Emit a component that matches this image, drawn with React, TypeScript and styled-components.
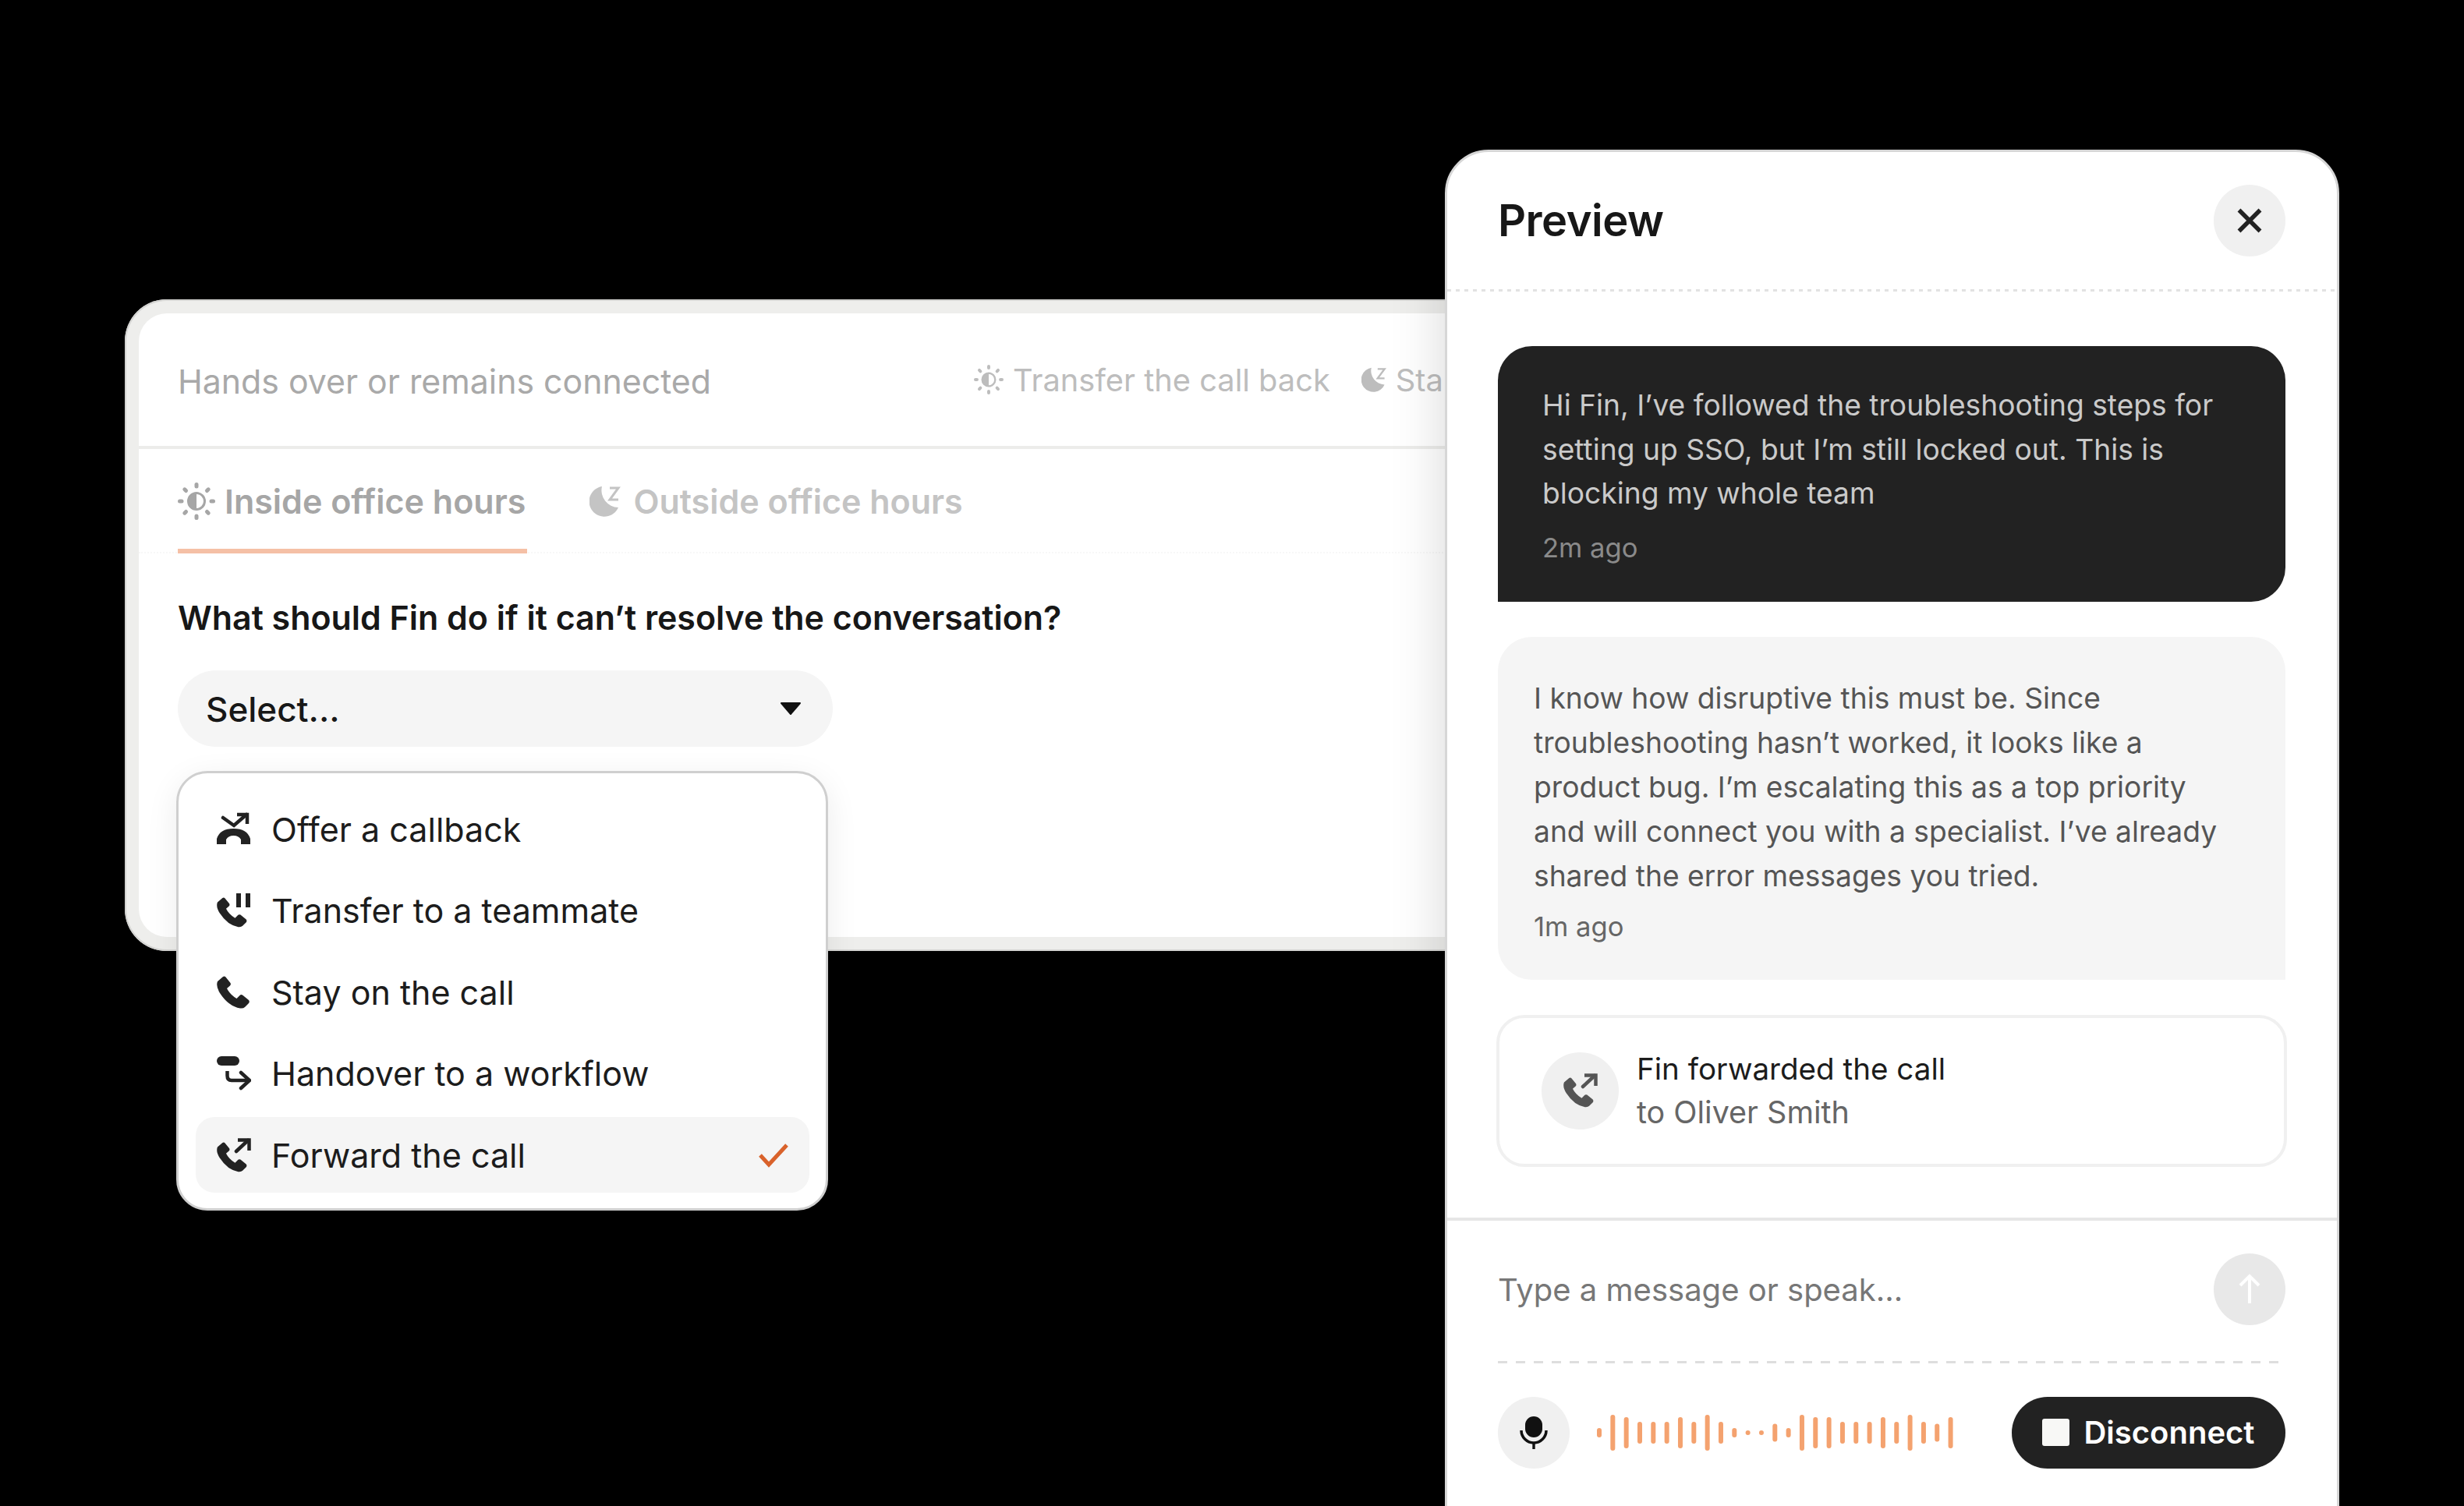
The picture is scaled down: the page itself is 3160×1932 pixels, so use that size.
import styled, { createGlobalStyle } from "styled-components";

const GlobalStyle = createGlobalStyle`
    html, body {
        margin: 0;
        padding: 0;
        background: #000;
    }
    * {
        box-sizing: border-box;
    }
`

const PHONE = "M1 7 L8 1 Q10 0 11.5 1.5 L17.5 9 Q18.5 11 17 12.5 L13 16 Q17 24 25.5 29 L29.5 25 Q31 23.5 33 24.5 L41 31 Q42.5 33 41 35 L36 40 Q34 42 30 41.5 Q15 39 4 22 Q-1.5 13 1 7 Z"

const menuItems = [
    { label: "Offer a callback", icon: "callback" },
    { label: "Transfer to a teammate", icon: "transfer" },
    { label: "Stay on the call", icon: "stay" },
    { label: "Handover to a workflow", icon: "handover" },
    { label: "Forward the call", icon: "forward", active: true },
]

// heights read off the reference, left to right
const waveBars = [12, 46, 40, 28, 28, 28, 40, 28, 46, 28, 12, 6, 6, 23, 12, 46, 40, 40, 28, 28, 28, 40, 28, 46, 28, 23, 40]

const SunIcon = ({ size, color }: { size: number; color: string }) => {
    const rays = [0, 45, 90, 135, 180, 225, 270, 315]
    return (
        <svg width={size} height={size} viewBox="0 0 48 48">
            {rays.map((r) => (
                <line key={r} x1="24" y1="2.5" x2="24" y2="5" stroke={color} strokeWidth="5" strokeLinecap="round" transform={`rotate(${r} 24 24)`} />
            ))}
            <circle cx="24" cy="24" r="10.5" fill="none" stroke={color} strokeWidth="3" />
            <path d="M24 13.5 A10.5 10.5 0 0 0 24 34.5 Z" fill={color} />
        </svg>
    )
}

const MoonIcon = ({ size, color }: { size: number; color: string }) => (
    <svg width={size} height={size} viewBox="0 0 40 40">
        <path d="M16 1 A19.5 19.5 0 1 0 37 28 A22 22 0 0 1 16 1 Z" fill={color} />
        <path d="M26 3 H37 L26 18 H37" fill="none" stroke={color} strokeWidth="3" />
    </svg>
)

const MenuIcon = ({ name, color = "#222" }: { name: string; color?: string }) => {
    const line = { fill: "none", stroke: color, strokeWidth: 4.5, strokeLinecap: "round" as const, strokeLinejoin: "miter" as const }
    return (
        <svg width="44" height="44" viewBox="0 0 44 44">
            {name === "callback" && (
                <>
                    <path d="M8 7 L22 17 L38 3" {...line} />
                    <path d="M26 3 H39 V15" {...line} strokeLinecap="butt" />
                    <path d="M0 41 V34 Q4 21 21.5 21 Q39 21 43 34 V41 H31 V35 Q28 30 21.5 30 Q15 30 12 35 V41 Z" fill={color} />
                </>
            )}
            {name === "transfer" && (
                <>
                    <path d={PHONE} fill={color} transform="translate(0 5) scale(0.92)" />
                    <rect x="25" y="0" width="6" height="18" fill={color} />
                    <rect x="37" y="0" width="6" height="18" fill={color} />
                </>
            )}
            {name === "stay" && <path d={PHONE} fill={color} transform="translate(0 1)" />}
            {name === "handover" && (
                <>
                    <rect x="0" y="0" width="29" height="12" rx="6" fill={color} />
                    <path d="M13.5 19 V25 Q13.5 31 19 31 H41" {...line} strokeLinecap="butt" />
                    <path d="M31 21 L42 31 L31 41" {...line} />
                </>
            )}
            {name === "forward" && (
                <>
                    <path d={PHONE} fill={color} transform="translate(0 5) scale(0.92)" />
                    <path d="M25 17 L40 3" {...line} />
                    <path d="M27 2.5 H41.5 V16" {...line} strokeLinecap="butt" />
                </>
            )}
        </svg>
    )
}

const App = () => {
    return (
        <Stage>
            <GlobalStyle />

            <SettingsCard>
                <SettingsInner>
                    <CardHeader>
                        <HeaderTitle>Hands over or remains connected</HeaderTitle>
                        <HeaderMeta>
                            <SunIcon size={38} color="#bdbdbd" />
                            <MetaText>Transfer the call back</MetaText>
                            <MoonSlot><MoonIcon size={32} color="#bdbdbd" /></MoonSlot>
                            <MetaText>Sta</MetaText>
                        </HeaderMeta>
                    </CardHeader>

                    <Tabs>
                        <Tab $active>
                            <SunIcon size={48} color="#a6a6a6" />
                            Inside office hours
                        </Tab>
                        <Tab>
                            <MoonIcon size={40} color="#c4c4c4" />
                            Outside office hours
                        </Tab>
                    </Tabs>

                    <CardBody>
                        <Question>What should Fin do if it can’t resolve the conversation?</Question>
                        <SelectBox>
                            <SelectValue>Select...</SelectValue>
                            <svg width="28" height="16" viewBox="0 0 28 16">
                                <path d="M2 1 H26 L14 15 Z" fill="#111" stroke="#111" strokeWidth="2" strokeLinejoin="round" />
                            </svg>
                        </SelectBox>
                    </CardBody>
                </SettingsInner>
            </SettingsCard>

            <Menu>
                {menuItems.map((item) => (
                    <MenuRow key={item.label} $active={item.active}>
                        <MenuIcon name={item.icon} />
                        <MenuLabel>{item.label}</MenuLabel>
                        {item.active && (
                            <CheckMark width="40" height="32" viewBox="0 0 40 32">
                                <path d="M3 16 L14 28 L37 3" fill="none" stroke="#d9622b" strokeWidth="5" />
                            </CheckMark>
                        )}
                    </MenuRow>
                ))}
            </Menu>

            <Preview>
                <PreviewHeader>
                    <PreviewTitle>Preview</PreviewTitle>
                    <RoundButton>
                        <svg width="32" height="32" viewBox="0 0 32 32">
                            <path d="M2.5 2.5 L29.5 29.5 M29.5 2.5 L2.5 29.5" stroke="#222" strokeWidth="5.5" />
                        </svg>
                    </RoundButton>
                </PreviewHeader>

                <Conversation>
                    <UserBubble>
                        <BubbleText>Hi Fin, I’ve followed the troubleshooting steps for setting up SSO, but I’m still locked out. This is blocking my whole team</BubbleText>
                        <BubbleTime $dark>2m ago</BubbleTime>
                    </UserBubble>
                    <FinBubble>
                        <BubbleText $tall>I know how disruptive this must be. Since troubleshooting hasn’t worked, it looks like a product bug. I’m escalating this as a top priority and will connect you with a specialist. I’ve already shared the error messages you tried.</BubbleText>
                        <BubbleTime>1m ago</BubbleTime>
                    </FinBubble>
                    <EventCard>
                        <EventIcon>
                            <MenuIcon name="forward" color="#555" />
                        </EventIcon>
                        <div>
                            <EventTitle>Fin forwarded the call</EventTitle>
                            <EventSub>to Oliver Smith</EventSub>
                        </div>
                    </EventCard>
                </Conversation>

                <Composer>
                    <InputRow>
                        <Placeholder>Type a message or speak...</Placeholder>
                        <RoundButton $muted>
                            <svg width="30" height="40" viewBox="0 0 30 40">
                                <path d="M15 38 V3 M3 15 L15 3 L27 15" fill="none" stroke="#fff" strokeWidth="4" />
                            </svg>
                        </RoundButton>
                    </InputRow>
                    <VoiceRow>
                        <RoundButton>
                            <svg width="36" height="42" viewBox="0 0 36 42">
                                <rect x="7" y="0" width="22" height="27" rx="11" fill="#111" />
                                <path d="M2 18 A16 16 0 0 0 34 18" fill="none" stroke="#111" strokeWidth="3.5" />
                                <rect x="16.3" y="33" width="3.4" height="9" fill="#111" />
                            </svg>
                        </RoundButton>
                        <Wave width="462" height="50" viewBox="0 0 462 50">
                            {waveBars.map((h, i) => (
                                <rect key={i} x={i * 17.33} y={25 - h / 2} width="6" height={h} rx="3" fill="#f4a26f" />
                            ))}
                        </Wave>
                        <DisconnectButton>
                            <StopSquare />
                            Disconnect
                        </DisconnectButton>
                    </VoiceRow>
                </Composer>
            </Preview>
        </Stage>
    )
}

export default App

const Stage = styled.div`
    position: relative;
    width: 3160px;
    height: 1932px;
    overflow: hidden;
    background: #000;
    font-family: "Inter", "Liberation Sans", sans-serif;
    color: #1a1a1a;
`

const SettingsCard = styled.section`
    position: absolute;
    left: 160px;
    top: 384px;
    width: 1760px;
    height: 836px;
    padding: 18px;
    border-radius: 54px;
    background: #eeeeec;
    box-shadow: inset 0 0 0 2px #d4d4d2;
`

const SettingsInner = styled.div`
    height: 100%;
    border-radius: 36px;
    background: #fff;
    overflow: hidden;
`

const CardHeader = styled.header`
    height: 174px;
    padding: 0 50px;
    display: flex;
    align-items: center;
    border-bottom: 4px solid #ececea;
`

const HeaderTitle = styled.h2`
    margin: 0;
    flex: none;
    width: 1021px;
    padding-top: 4px;
    font-size: 42.8px;
    font-weight: 400;
    color: #a9a9a9;
    white-space: nowrap;
`

const HeaderMeta = styled.div`
    flex: none;
    display: flex;
    align-items: center;
    gap: 12px;
    white-space: nowrap;
`

const MetaText = styled.span`
    font-size: 39.8px;
    color: #bdbdbd;
`

const MoonSlot = styled.span`
    display: flex;
    margin-left: 28px;
`

const Tabs = styled.nav`
    height: 134px;
    padding: 0 50px;
    display: flex;
    gap: 80px;
    border-bottom: 2px dotted #f8f8f8;
`

const Tab = styled.div<{ $active?: boolean }>`
    height: 134px;
    margin-bottom: -2px;
    padding: 6px ${({ $active }) => ($active ? "2px" : "0")} 0 0;
    display: flex;
    align-items: center;
    gap: ${({ $active }) => ($active ? "12px" : "16px")};
    font-size: 43px;
    font-weight: 600;
    color: ${({ $active }) => ($active ? "#a6a6a6" : "#c4c4c4")};
    border-bottom: 6px solid ${({ $active }) => ($active ? "#f5c0a6" : "transparent")};
`

const CardBody = styled.div`
    padding: 55px 50px 0;
`

const Question = styled.h3`
    margin: 0 0 41px;
    font-size: 42.9px;
    line-height: 54px;
    font-weight: 600;
    color: #171717;
`

const SelectBox = styled.div`
    width: 840px;
    height: 98px;
    padding: 0 40px 0 36px;
    display: flex;
    align-items: center;
    justify-content: space-between;
    border-radius: 49px;
    background: #f5f5f5;
`

const SelectValue = styled.span`
    padding-top: 2px;
    font-size: 44px;
    font-weight: 500;
    color: #171717;
`

const Menu = styled.div`
    position: absolute;
    left: 226px;
    top: 989px;
    width: 836px;
    height: 564px;
    padding: 23px 21px 20px 22px;
    display: flex;
    flex-direction: column;
    justify-content: space-between;
    border: 3px solid #cfcfcf;
    border-radius: 40px;
    background: #fff;
    box-shadow: 0 10px 40px rgba(0, 0, 0, 0.08);
`

const MenuRow = styled.div<{ $active?: boolean }>`
    height: 97px;
    padding: 0 26px 0 27px;
    display: flex;
    align-items: center;
    gap: 26px;
    border-radius: 24px;
    background: ${({ $active }) => ($active ? "#f5f5f5" : "transparent")};
`

const MenuLabel = styled.span`
    flex: 1;
    font-size: 43px;
    color: #1c1c1c;
`

const CheckMark = styled.svg`
    display: block;
`

const Preview = styled.aside`
    position: absolute;
    left: 1853px;
    top: 192px;
    width: 1147px;
    height: 1800px;
    border: 3px solid #d6d6d6;
    border-radius: 56px;
    background: #fff;
    box-shadow: 0 0 70px rgba(0, 0, 0, 0.16);
`

const PreviewHeader = styled.header`
    height: 179px;
    padding: 0 66px 3px 65px;
    display: flex;
    align-items: center;
    justify-content: space-between;
    background: repeating-linear-gradient(90deg, #e2e2e2 0 5px, transparent 5px 11px) bottom / 100% 3px no-repeat;
`

const PreviewTitle = styled.h1`
    margin: 0;
    font-size: 56px;
    letter-spacing: -0.5px;
    font-weight: 600;
    color: #171717;
`

const RoundButton = styled.div<{ $muted?: boolean }>`
    width: 92px;
    height: 92px;
    flex: none;
    display: flex;
    align-items: center;
    justify-content: center;
    border-radius: 50%;
    background: ${({ $muted }) => ($muted ? "#e8e8e8" : "#f0f0f0")};
`

const Conversation = styled.div`
    padding: 70px 66px 65px 65px;
    display: flex;
    flex-direction: column;
    gap: 45px;
    border-bottom: 4px solid #e6e6e6;
`

const UserBubble = styled.div`
    padding: 48px 57px;
    border-radius: 44px 44px 44px 0;
    background: #222;
    color: #cacaca;
`

const FinBubble = styled.div`
    padding: 50px 62px 47px 46px;
    border-radius: 44px 44px 0 44px;
    background: #f5f5f5;
    color: #555;
`

const BubbleText = styled.p<{ $tall?: boolean }>`
    margin: 0;
    font-size: 37.2px;
    line-height: ${({ $tall }) => ($tall ? "57px" : "56.5px")};
`

const BubbleTime = styled.div<{ $dark?: boolean }>`
    margin-top: ${({ $dark }) => ($dark ? "18px" : "14px")};
    font-size: 34.6px;
    line-height: 44px;
    color: ${({ $dark }) => ($dark ? "#8a8a8a" : "#666")};
`

const EventCard = styled.div`
    height: 195px;
    margin: 0 -2px;
    padding: 0 54px;
    display: flex;
    align-items: center;
    gap: 23px;
    border: 4px solid #f0f0f0;
    border-radius: 36px;
`

const EventIcon = styled.div`
    width: 99px;
    height: 99px;
    display: flex;
    align-items: center;
    justify-content: center;
    border-radius: 50%;
    background: #f0f0f0;
`

const EventTitle = styled.div`
    font-size: 38.6px;
    line-height: 56px;
    color: #1c1c1c;
`

const EventSub = styled.div`
    font-size: 39.5px;
    line-height: 56px;
    color: #666;
`

const Composer = styled.div`
    padding: 0 66px 0 65px;
`

const InputRow = styled.div`
    height: 183px;
    padding: 42px 0 49px;
    display: flex;
    align-items: center;
    justify-content: space-between;
    background: repeating-linear-gradient(90deg, #dedede 0 12px, transparent 12px 23px) bottom / 100% 3px no-repeat;
`

const Placeholder = styled.span`
    padding-top: 1px;
    font-size: 40px;
    color: #777;
`

const VoiceRow = styled.div`
    padding-top: 43px;
    display: flex;
    align-items: center;
`

const Wave = styled.svg`
    margin-left: 35px;
    flex: none;
`

const DisconnectButton = styled.div`
    margin-left: auto;
    width: 351px;
    height: 92px;
    display: flex;
    align-items: center;
    justify-content: center;
    gap: 18px;
    border-radius: 46px;
    background: #222;
    color: #fff;
    font-size: 40px;
    font-weight: 600;
`

const StopSquare = styled.span`
    width: 35px;
    height: 35px;
    border-radius: 3px;
    background: #f8f8f6;
`
